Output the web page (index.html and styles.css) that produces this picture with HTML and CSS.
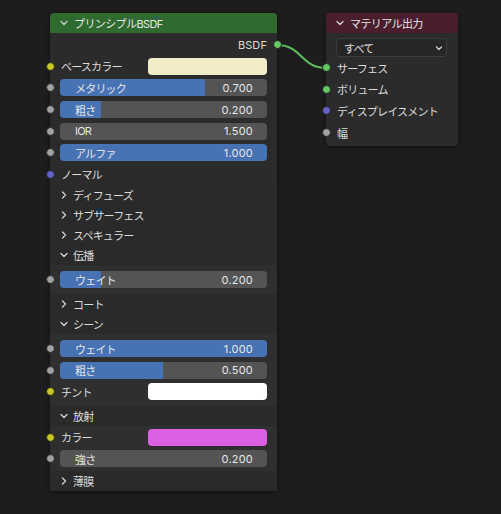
FILE: index.html
```html
<!DOCTYPE html>
<html lang="ja">
<head>
<meta charset="utf-8">
<title>Node Editor</title>
<link rel="stylesheet" href="styles.css">
</head>
<body>
<div class="canvas">
  <svg class="links" width="501" height="514" viewBox="0 0 501 514">
    <path d="M277 45 C 302 45, 301 68, 326 68"/>
  </svg>

  <div class="node principled">
    <div class="node-header green">
      <svg class="chev" viewBox="0 0 8 8"><polyline points="1,2.5 4,5.5 7,2.5"/></svg>
      <span>プリンシプルBSDF</span>
    </div>
    <div class="node-body">
      <div class="row output"><span class="out-label">BSDF</span><i class="socket s-green sock-out"></i></div>
      <div class="row"><i class="socket s-yellow"></i><span class="label">ベースカラー</span><div class="swatch cream"></div></div>
      <div class="row"><i class="socket s-grey"></i><div class="slider" style="--v:70%"><span class="s-label">メタリック</span><span class="s-val">0.700</span></div></div>
      <div class="row"><i class="socket s-grey"></i><div class="slider" style="--v:20%"><span class="s-label">粗さ</span><span class="s-val">0.200</span></div></div>
      <div class="row"><i class="socket s-grey"></i><div class="slider" style="--v:0%"><span class="s-label">IOR</span><span class="s-val">1.500</span></div></div>
      <div class="row"><i class="socket s-grey"></i><div class="slider" style="--v:100%"><span class="s-label">アルファ</span><span class="s-val">1.000</span></div></div>
      <div class="row"><i class="socket s-purple"></i><span class="label">ノーマル</span></div>

      <div class="panel-head"><svg class="chev" viewBox="0 0 8 8"><polyline points="2.5,1 5.5,4 2.5,7"/></svg><span>ディフューズ</span></div>
      <div class="panel-head"><svg class="chev" viewBox="0 0 8 8"><polyline points="2.5,1 5.5,4 2.5,7"/></svg><span>サブサーフェス</span></div>
      <div class="panel-head"><svg class="chev" viewBox="0 0 8 8"><polyline points="2.5,1 5.5,4 2.5,7"/></svg><span>スペキュラー</span></div>
      <div class="panel-head"><svg class="chev" viewBox="0 0 8 8"><polyline points="1,2.5 4,5.5 7,2.5"/></svg><span>伝播</span></div>
      <div class="panel-body">
        <div class="row"><i class="socket s-grey"></i><div class="slider" style="--v:20%"><span class="s-label">ウェイト</span><span class="s-val">0.200</span></div></div>
      </div>
      <div class="panel-head"><svg class="chev" viewBox="0 0 8 8"><polyline points="2.5,1 5.5,4 2.5,7"/></svg><span>コート</span></div>
      <div class="panel-head"><svg class="chev" viewBox="0 0 8 8"><polyline points="1,2.5 4,5.5 7,2.5"/></svg><span>シーン</span></div>
      <div class="panel-body">
        <div class="row"><i class="socket s-grey"></i><div class="slider" style="--v:100%"><span class="s-label">ウェイト</span><span class="s-val">1.000</span></div></div>
        <div class="row"><i class="socket s-grey"></i><div class="slider" style="--v:50%"><span class="s-label">粗さ</span><span class="s-val">0.500</span></div></div>
        <div class="row"><i class="socket s-yellow"></i><span class="label">チント</span><div class="swatch white"></div></div>
      </div>
      <div class="panel-head"><svg class="chev" viewBox="0 0 8 8"><polyline points="1,2.5 4,5.5 7,2.5"/></svg><span>放射</span></div>
      <div class="panel-body tight">
        <div class="row"><i class="socket s-yellow"></i><span class="label">カラー</span><div class="swatch pink"></div></div>
        <div class="row"><i class="socket s-grey"></i><div class="slider" style="--v:0%"><span class="s-label">強さ</span><span class="s-val">0.200</span></div></div>
      </div>
      <div class="panel-head"><svg class="chev" viewBox="0 0 8 8"><polyline points="2.5,1 5.5,4 2.5,7"/></svg><span>薄膜</span></div>
    </div>
  </div>

  <div class="node output-node">
    <div class="node-header maroon">
      <svg class="chev" viewBox="0 0 8 8"><polyline points="1,2.5 4,5.5 7,2.5"/></svg>
      <span>マテリアル出力</span>
    </div>
    <div class="node-body out-body">
      <div class="dropdown"><span>すべて</span><svg class="chev small" viewBox="0 0 8 8"><polyline points="1.5,3 4,5.5 6.5,3"/></svg></div>
      <div class="row"><i class="socket s-green"></i><span class="label">サーフェス</span></div>
      <div class="row"><i class="socket s-green"></i><span class="label">ボリューム</span></div>
      <div class="row"><i class="socket s-purple"></i><span class="label">ディスプレイスメント</span></div>
      <div class="row"><i class="socket s-grey"></i><span class="label">幅</span></div>
    </div>
  </div>
</div>
</body>
</html>
```

FILE: styles.css
```css
* { box-sizing: border-box; }

html, body {
  margin: 0;
  padding: 0;
  background: #1d1d1d;
}

body {
  font-family: "Inter", "Noto Sans CJK JP", sans-serif;
  font-size: 11px;
  color: #dcdcdc;
}

.canvas {
  position: relative;
  width: 501px;
  height: 514px;
  overflow: hidden;
  background: #1d1d1d;
}

.links {
  position: absolute;
  left: 0;
  top: 0;
}

.links path {
  fill: none;
  stroke: #5cbf5c;
  stroke-width: 2;
}

.node {
  position: absolute;
  background: #2b2b2b;
  border-radius: 4px;
  box-shadow: 0 1px 4px rgba(0, 0, 0, 0.55);
  display: flex;
  flex-direction: column;
}

.principled {
  left: 50px;
  top: 13px;
  width: 227px;
  height: 478px;
}

.output-node {
  left: 326px;
  top: 13px;
  width: 132px;
  height: 133px;
}

.node-header {
  height: 20px;
  display: flex;
  align-items: center;
  gap: 6px;
  padding-left: 10px;
  border-radius: 4px 4px 0 0;
  color: #e8e8e8;
  letter-spacing: -0.6px;
}

.node-header.green { background: #2f6a2f; }
.node-header.maroon { background: #4a1e2c; }

.chev {
  width: 8px;
  height: 8px;
  flex: none;
}

.chev polyline {
  fill: none;
  stroke: #d4d4d4;
  stroke-width: 1.3;
  stroke-linecap: round;
  stroke-linejoin: round;
}

.node-body {
  display: flex;
  flex-direction: column;
  padding-top: 1px;
}

.row {
  position: relative;
  height: 21.6px;
  display: flex;
  align-items: center;
  padding: 0 10px;
}

.row.output {
  justify-content: flex-end;
}

.out-label {
  letter-spacing: 0.1px;
}

.label {
  flex: 1;
  padding-left: 1px;
  letter-spacing: -0.8px;
  white-space: nowrap;
}

.socket {
  position: absolute;
  left: -4.5px;
  top: 50%;
  width: 9px;
  height: 9px;
  margin-top: -4.5px;
  border-radius: 50%;
  border: 1px solid #202020;
}

.socket.sock-out {
  left: auto;
  right: -4.5px;
}

.s-green { background: #63c763; }
.s-yellow { background: #c7c729; }
.s-grey { background: #a1a1a1; }
.s-purple { background: #6363c7; }

.swatch {
  width: 119px;
  height: 17px;
  border-radius: 4px;
  flex: none;
}

.swatch.cream { background: #f1ebc7; }
.swatch.white { background: #ffffff; }
.swatch.pink { background: #dc5fe4; }

.slider {
  flex: 1;
  height: 17px;
  border-radius: 4px;
  display: flex;
  align-items: center;
  justify-content: space-between;
  padding: 0 14px 0 15px;
  background: linear-gradient(to right, #4772b3 var(--v), #545454 var(--v));
  color: #e6e6e6;
}

.s-label {
  letter-spacing: -0.8px;
}

.s-val {
  letter-spacing: 0.2px;
}

.panel-head {
  height: 20px;
  display: flex;
  align-items: center;
  gap: 5px;
  padding-left: 10px;
  letter-spacing: -0.8px;
  background: #2a2a2a;
}

.panel-body {
  background: #2f2f2f;
  padding: 4px 0 3px;
}

.panel-body.tight {
  padding: 1px 0 1px;
}

.out-body {
  padding-top: 5px;
}

.dropdown {
  height: 19px;
  margin: 0 11px 0 10px;
  border: 1px solid #3c3c3c;
  border-radius: 4px;
  background: #262626;
  display: flex;
  align-items: center;
  justify-content: space-between;
  padding: 0 3px 0 7px;
  color: #e0e0e0;
  letter-spacing: -0.8px;
}

.chev.small {
  width: 8px;
  height: 8px;
}
```
